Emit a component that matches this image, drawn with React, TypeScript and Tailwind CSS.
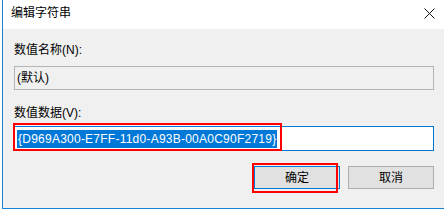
export default function App() {
  return (
    <div className="relative w-[446px] h-[210px] bg-white text-[12px] leading-[16px] text-black font-['Liberation_Sans','Noto_Sans_CJK_SC',sans-serif]">
      <div className="ml-[2px] w-[442px] h-[209px] flex flex-col border-l border-b border-[#1883d7]">
        {/* title bar */}
        <div className="h-[29px] bg-white flex items-start justify-between pl-[8px] pr-[9px] pt-[5px]">
          <span>编辑字符串</span>
          <svg width="11" height="11" viewBox="0 0 11 11" className="mt-[3px]">
            <path d="M0.5 0.5 L10.5 10.5 M10.5 0.5 L0.5 10.5" stroke="#111" strokeWidth="1" fill="none" />
          </svg>
        </div>

        {/* body */}
        <div className="flex-1 bg-[#f0f0f0] pl-[11px] pr-[10px] pt-[13px]">
          <div>数值名称(N):</div>
          <div className="mt-[8px] h-[24px] border border-[#b4b4b4] bg-[#f0f0f0] flex items-center pl-[2px]">
            (默认)
          </div>

          <div className="mt-[15px]">数值数据(V):</div>
          <div className="mt-[5px] h-[25px] border border-[#0078d7] bg-white flex items-center pl-[2px]">
            <span className="bg-[#0078d7] text-white leading-[18px] px-[1px] tracking-[0.24px]">
              {"{D969A300-E7FF-11d0-A93B-00A0C90F2719}"}
            </span>
          </div>

          <div className="mt-[15px] flex justify-end gap-[8px]">
            <button className="w-[86px] h-[23px] bg-[#e1e1e1] border border-[#0078d7]">确定</button>
            <button className="w-[86px] h-[23px] bg-[#e1e1e1] border border-[#adadad]">取消</button>
          </div>
        </div>
      </div>

      {/* red annotation boxes */}
      <div className="absolute left-[13px] top-[123px] w-[269px] h-[28px] border-2 border-[#f00]" />
      <div className="absolute left-[252px] top-[163px] w-[86px] h-[30px] border-2 border-[#f00]" />
    </div>
  );
}
